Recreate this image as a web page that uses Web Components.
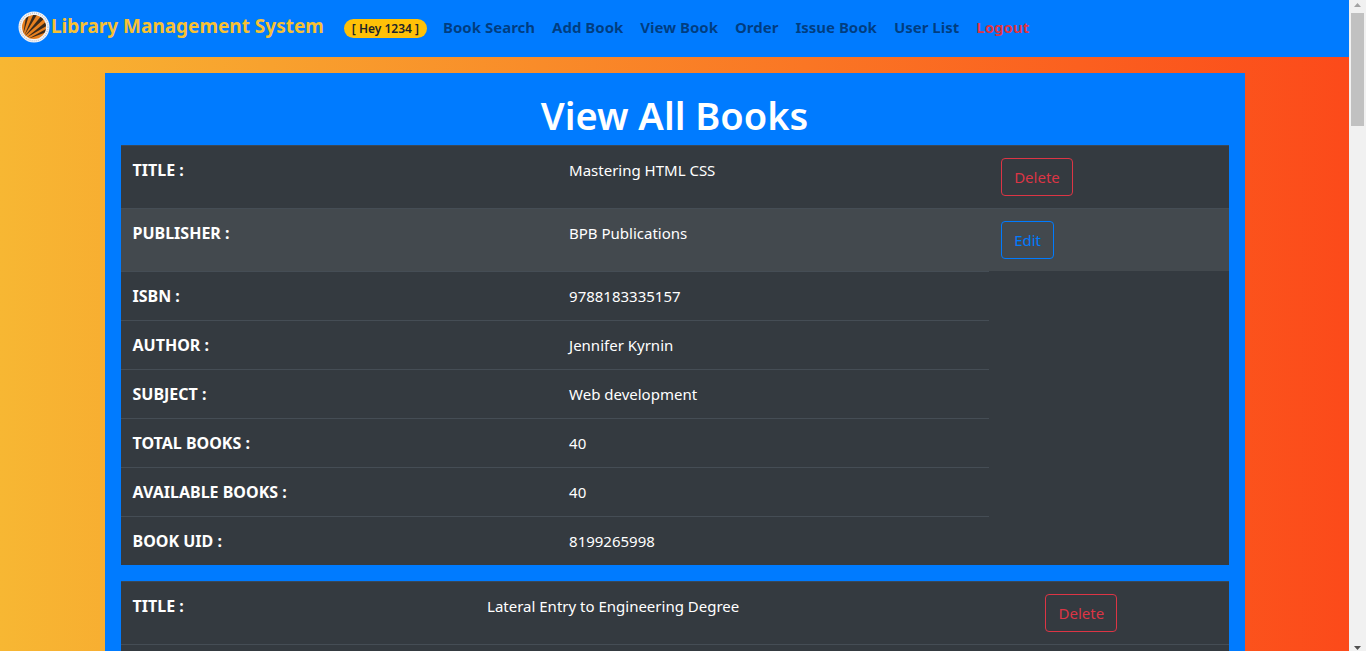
<!DOCTYPE html>
<html lang="en">
<head>
<meta charset="utf-8">
<title>Library Management System</title>
<style>
  body { margin: 0; font: 15px/24px "Noto Sans", "Open Sans", sans-serif; color: #fff; }
</style>
</head>
<body>
<library-app>
  <library-nav slot="nav">
    <nav-link>Book Search</nav-link>
    <nav-link>Add Book</nav-link>
    <nav-link>View Book</nav-link>
    <nav-link>Order</nav-link>
    <nav-link>Issue Book</nav-link>
    <nav-link>User List</nav-link>
    <nav-link tone="danger">Logout</nav-link>
  </library-nav>
  <books-panel heading="View All Books">
    <book-table id="book-1"></book-table>
    <book-table id="book-2"></book-table>
  </books-panel>
</library-app>

<script>
class BaseElement extends HTMLElement {
  render(html) {
    if (!this.shadowRoot) this.attachShadow({ mode: "open" });
    const t = document.createElement("template");
    t.innerHTML = html;
    this.shadowRoot.replaceChildren(t.content.cloneNode(true));
  }
}

customElements.define("library-app", class extends BaseElement {
  connectedCallback() {
    this.render(`
      <style>
        :host { display: flex; height: 100vh; }
        .page {
          flex: 1; min-width: 0; overflow-y: auto; scrollbar-width: none;
          background: linear-gradient(to right, #f7b733, #fc4a1a);
        }
        main { padding: 16px 0; }
      </style>
      <div class="page">
        <slot name="nav"></slot>
        <main><slot></slot></main>
      </div>
      <scroll-track></scroll-track>`);
  }
});

customElements.define("scroll-track", class extends BaseElement {
  connectedCallback() {
    this.render(`
      <style>
        :host {
          display: flex; flex-direction: column; align-items: center;
          width: 17px; background: #f1f1f1;
        }
        svg { display: block; width: 17px; height: 13px; }
        .thumb { width: 13px; height: 113px; background: #c1c1c1; }
        .rest { flex: 1; }
      </style>
      <svg viewBox="0 0 17 13" aria-hidden="true"><path d="M5 7 8.500 3 12 7z" fill="#a3a3a3"/></svg>
      <div class="thumb"></div>
      <div class="rest"></div>
      <svg viewBox="0 0 17 13" aria-hidden="true"><path d="M5 8 8.500 12 12 8z" fill="#505050"/></svg>`);
  }
});

customElements.define("library-logo", class extends BaseElement {
  connectedCallback() {
    this.render(`
      <style>
        :host { display: block; }
        svg { display: block; width: 32px; height: 32px; }
      </style>
      <svg viewBox="0 0 32 32" aria-hidden="true">
        <defs><clipPath id="disc"><circle cx="16" cy="16" r="12"/></clipPath></defs>
        <circle cx="16" cy="16" r="15.500" fill="#f4f4f6"/>
        <circle cx="16" cy="16" r="13.900" fill="none" stroke="#c3c7d0" stroke-width="1.400" stroke-dasharray="1 1.100"/>
        <g clip-path="url(#disc)">
          <rect width="32" height="32" fill="#e8801f"/>
          <g fill="#3a2a1c">
            <path d="M5 24 8 6 11 4z"/>
            <path d="M6 25 16 2 20 2z"/>
            <path d="M6 26 24 4 27 7z"/>
            <path d="M8 27 29 10 30 14z"/>
            <path d="M10 28 30 17 29 21z"/>
          </g>
        </g>
      </svg>`);
  }
});

customElements.define("library-nav", class extends BaseElement {
  connectedCallback() {
    this.render(`
      <style>
        :host { display: block; background: #007bff; }
        nav { display: flex; align-items: flex-start; padding: 8px 16px; }
        .brand {
          display: flex; align-items: center; gap: 1px;
          height: 31px; padding: 3px 0 7px 2px; margin-right: 20px;
          color: #f7c133; font-size: 19px; font-weight: 700;
          text-decoration: none; white-space: nowrap;
        }
        .brand span { padding-bottom: 2px; }
        .badge {
          align-self: center;
          padding: 0 8px; margin-right: 8px; border-radius: 10px;
          background: #ffc107; color: #212529;
          font-size: 12px; line-height: 19px; font-weight: 600; white-space: nowrap;
        }
        .links { display: flex; gap: 1px; }
      </style>
      <nav>
        <a class="brand" href="#"><library-logo></library-logo><span>Library Management System</span></a>
        <span class="badge">[ Hey 1234 ]</span>
        <div class="links"><slot></slot></div>
      </nav>`);
  }
});

customElements.define("nav-link", class extends BaseElement {
  connectedCallback() {
    this.render(`
      <style>
        :host { display: block; }
        a {
          display: block; padding: 7px 8px 9px; white-space: nowrap;
          color: rgba(0, 0, 0, .5); font-weight: 700; text-decoration: none;
        }
        :host([tone="danger"]) a { color: #dc3545; }
      </style>
      <a href="#"><slot></slot></a>`);
  }
});

customElements.define("books-panel", class extends BaseElement {
  connectedCallback() {
    this.render(`
      <style>
        :host {
          display: block; box-sizing: border-box; max-width: 1140px;
          margin: 0 auto; padding: 16px; background: #007bff;
        }
        h1 {
          margin: 2px 0 6px; text-align: center;
          font-size: 38px; line-height: 48px; font-weight: 600;
        }
      </style>
      <h1></h1>
      <slot></slot>`);
    this.shadowRoot.querySelector("h1").textContent = this.getAttribute("heading");
  }
});

customElements.define("outline-button", class extends BaseElement {
  connectedCallback() {
    this.render(`
      <style>
        :host { display: inline-block; vertical-align: top; --tone: #007bff; }
        :host([tone="danger"]) { --tone: #dc3545; }
        button {
          display: block; margin: 0; padding: 6px 12px;
          border: 1px solid var(--tone); border-radius: 4px;
          background: transparent; color: var(--tone);
          font: inherit; cursor: pointer;
        }
      </style>
      <button type="button"><slot></slot></button>`);
  }
});

customElements.define("book-table", class extends BaseElement {
  set book({ columns, rows }) {
    const cols = columns.map(w => `<col style="width:${w}">`).join("");
    const body = rows.map(({ label = "", value = "", action, tone = "", active }) => `
      <tr class="${active ? "active" : ""}">
        <th scope="row">${label}</th><td>${value}</td>
        ${action === undefined ? "" : `<td class="action">${action && `<outline-button tone="${tone}">${action}</outline-button>`}</td>`}
      </tr>`).join("");
    this.render(`
      <style>
        :host { display: block; margin-bottom: 16px; }
        table {
          width: 100%; table-layout: fixed; border-spacing: 0;
          background: #343a40; color: #fff;
        }
        th, td {
          padding: 12px; border-top: 1px solid #454d55;
          vertical-align: top; text-align: left; line-height: 24px;
        }
        th { font-size: 16px; font-weight: 700; }
        tr:first-child > * { border-top-color: #3a4857; }
        .action { height: 38px; }
        .active > * { background: #43494e; }
      </style>
      <table><colgroup>${cols}</colgroup><tbody>${body}</tbody></table>`);
  }
});

document.getElementById("book-1").book = {
  columns: ["39.4%", "39%", "21.6%"],
  rows: [
    { label: "TITLE :", value: "Mastering HTML CSS", action: "Delete", tone: "danger" },
    { label: "PUBLISHER :", value: "BPB Publications", action: "Edit", tone: "primary", active: true },
    { label: "ISBN :", value: "9788183335157" },
    { label: "AUTHOR :", value: "Jennifer Kyrnin" },
    { label: "SUBJECT :", value: "Web development" },
    { label: "TOTAL BOOKS :", value: "40" },
    { label: "AVAILABLE BOOKS :", value: "40" },
    { label: "BOOK UID :", value: "8199265998" }
  ]
};

document.getElementById("book-2").book = {
  columns: ["32%", "50.4%", "17.6%"],
  rows: [
    { label: "TITLE :", value: "Lateral Entry to Engineering Degree", action: "Delete", tone: "danger" },
    { action: "" }
  ]
};
</script>
</body>
</html>
